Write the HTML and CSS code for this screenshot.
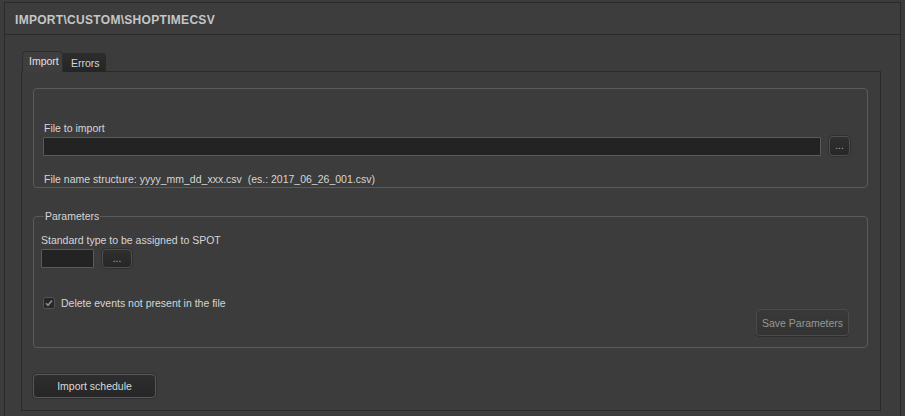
FILE: index.html
```html
<!DOCTYPE html>
<html>
<head>
<meta charset="utf-8">
<link rel="stylesheet" href="styles.css">
</head>
<body>
<div class="window">
  <div class="titlebar"><span class="title">IMPORT\CUSTOM\SHOPTIMECSV</span></div>
  <div class="content">
    <div class="tabs">
      <div class="tab active">Import</div>
      <div class="tab">Errors</div>
    </div>
    <div class="panel">
      <div class="group file-group">
        <div class="label">File to import</div>
        <div class="row file-row">
          <div class="input wide"></div>
          <div class="btn dots">...</div>
        </div>
        <div class="hint">File name structure: yyyy_mm_dd_xxx.csv&nbsp; (es.: 2017_06_26_001.csv)</div>
      </div>
      <fieldset class="params">
        <legend>Parameters</legend>
        <div class="label std-label">Standard type to be assigned to SPOT</div>
        <div class="row std-row">
          <div class="input small"></div>
          <div class="btn dots wide-dots">...</div>
        </div>
        <div class="check-row">
          <svg class="checkbox" width="12" height="12" viewBox="0 0 12 12">
            <rect x="0.5" y="0.5" width="11" height="11" rx="2" fill="#272727" stroke="#555"/>
            <polyline points="3,6.2 5,8.3 9,3.6" fill="none" stroke="#8e8e8e" stroke-width="1.6"/>
          </svg>
          <span>Delete events not present in the file</span>
        </div>
        <div class="save-row">
          <div class="btn save">Save Parameters</div>
        </div>
      </fieldset>
      <div class="btn import">Import schedule</div>
    </div>
  </div>
</div>
</body>
</html>
```
FILE: styles.css
```css
html, body {
  margin: 0;
  padding: 0;
}
body {
  background: #3c3c3c;
  font-family: "Liberation Sans", Arial, sans-serif;
  font-size: 10.5px;
  color: #d6d6d6;
  height: 416px;
  overflow: hidden;
}
.window {
  margin: 2px 4px 0 4px;
  border: 1px solid #2a2a2a;
  border-bottom: none;
  height: 414px;
  box-sizing: border-box;
  background: #3c3c3c;
}
.titlebar {
  height: 31px;
  border-bottom: 1px solid #2a2a2a;
  display: flex;
  align-items: center;
  padding-left: 10px;
  background: #3d3d3d;
}
.title {
  font-size: 12px;
  font-weight: bold;
  letter-spacing: 0.3px;
  color: #c6c6c6;
  line-height: 14px;
  margin-top: 2px;
}
.content {
  padding: 17px 19px 0 16px;
}
.tabs {
  display: flex;
  align-items: flex-end;
  margin-left: 1px;
  height: 20px;
  margin-bottom: -1px;
}
.tab {
  box-sizing: border-box;
  border: 1px solid #2a2a2a;
  border-bottom: none;
  border-radius: 4px 4px 0 0;
  padding: 0 6px 0 6px;
  line-height: 17px;
}
.tab.active {
  height: 21px;
  width: 41px;
  background: #3e3e3e;
  color: #e2e2e2;
  position: relative;
  z-index: 1;
  padding-top: 1px;
  border-color: #2e2e2e;
}
.tab:not(.active) {
  height: 19px;
  width: 43px;
  background: linear-gradient(#2d2d2d, #242424);
  border-left: none;
  border-radius: 0 4px 0 0;
  padding-left: 8px;
  padding-top: 1px;
  color: #d6d6d6;
}
.panel {
  border: 1px solid #2a2a2a;
  padding: 16px 12px 12px 11px;
  display: flex;
  flex-direction: column;
  align-items: stretch;
}
.group {
  border: 1px solid #5a5a5a;
  border-radius: 4px;
}
.file-group {
  padding: 33px 17px 1px 9px;
}
.label {
  line-height: 13px;
  padding-left: 1px;
}
.row {
  display: flex;
  align-items: center;
}
.file-row {
  margin-top: 1px;
  gap: 8px;
}
.input {
  box-sizing: border-box;
  height: 19px;
  background: #232323;
  border: 1px solid #5a5a5a;
  border-radius: 1px;
}
.input.wide {
  flex: 1;
}
.hint {
  margin-top: 17px;
  line-height: 13px;
  padding-left: 1px;
}
.btn {
  box-sizing: border-box;
  border: 1px solid #4e4e4e;
  border-radius: 4px;
  background: linear-gradient(#2f2f2f, #272727);
  color: #d6d6d6;
  display: flex;
  align-items: center;
  justify-content: center;
  box-shadow: 0 0 0 1px #303030;
}
.dots {
  width: 21px;
  height: 20px;
  color: #b0b0b0;
  font-size: 10px;
  padding-bottom: 1px;
}
.wide-dots {
  width: 30px;
  height: 19px;
}
.params {
  margin: 21px 0 0 0;
  border: 1px solid #5a5a5a;
  border-radius: 4px;
  padding: 10px 18px 11px 7px;
  min-width: 0;
}
.params legend {
  padding: 0 1px;
  margin-left: 3px;
  line-height: 14px;
}
.std-label {
  line-height: 14px;
  margin-left: -1px;
}
.std-row {
  margin-top: 2px;
  gap: 8px;
}
.input.small {
  width: 53px;
}
.check-row {
  margin-top: 28px;
  display: flex;
  align-items: center;
  height: 13px;
  margin-left: 2px;
  gap: 6px;
}
.checkbox {
  display: block;
}
.save-row {
  display: flex;
  justify-content: flex-end;
}
.save {
  width: 93px;
  height: 27px;
  color: #969696;
  background: linear-gradient(#393939, #333333);
  border-color: #4a4a4a;
  box-shadow: 0 1px 0 #2e2e2e;
}
.import {
  margin-top: 26px;
  width: 123px;
  height: 24px;
  background: linear-gradient(#2e2e2e, #262626);
  border-color: #585858;
  color: #dadada;
}
```
